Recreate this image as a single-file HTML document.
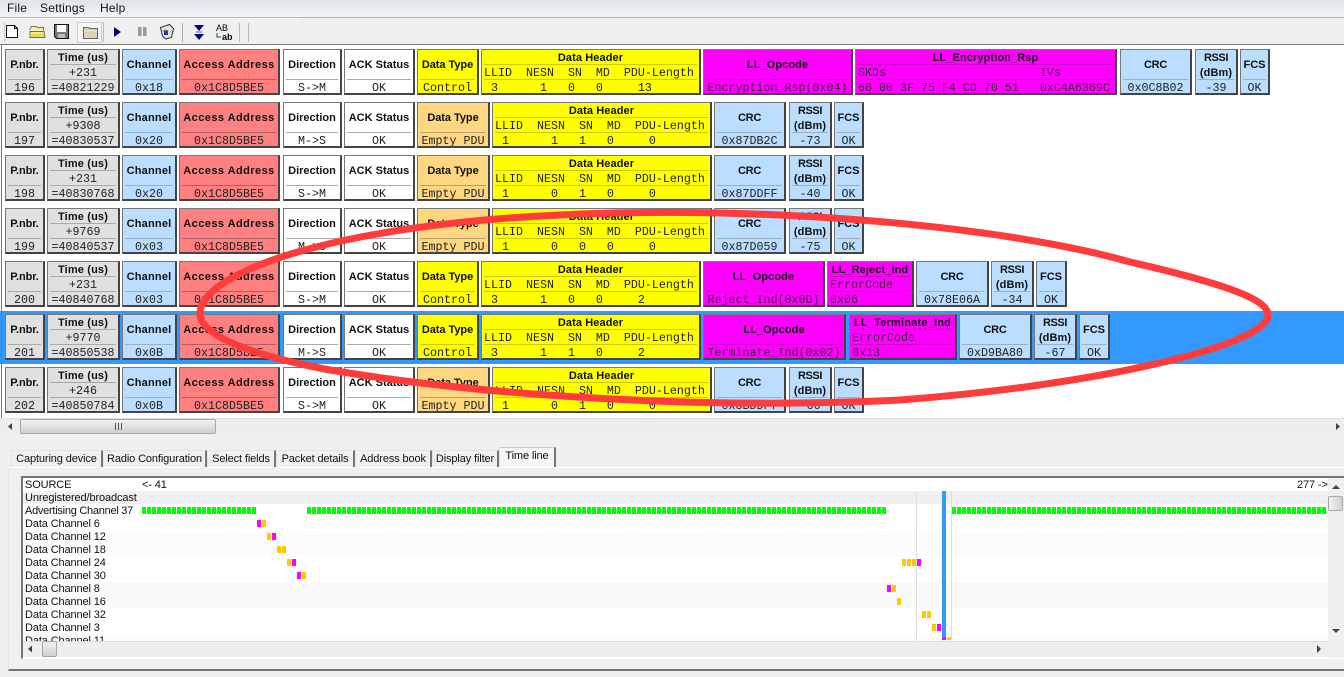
<!DOCTYPE html>
<html><head><meta charset="utf-8"><title>Packet sniffer</title>
<style>
html,body{margin:0;padding:0;background:#f0f0f0}
body{position:relative;width:1344px;height:677px;overflow:hidden;font-family:"Liberation Sans",sans-serif;color:#000}
.a{position:absolute}
#menu{left:0;top:0;width:1344px;height:17px;background:linear-gradient(#dfe3ea,#f2f4f8);border-bottom:1px solid #b4b4b4;font-size:12px;line-height:16px}
#menu span{position:absolute;top:0;letter-spacing:.2px;color:#111}
#main{left:0;top:44px;width:1344px;height:374px;background:#fff;border-top:1px solid #777;box-sizing:border-box}
.sel{position:absolute;left:0;top:311px;width:1344px;height:53px;background:#3399ff}
.r{position:absolute;left:0;width:1344px;height:46px}
.c{position:absolute;top:0;height:46px;box-sizing:border-box;border:1px solid;border-width:1px 2px 2px 1px;border-color:#777 #444 #444 #777;overflow:hidden}
.g{background:#e0e0e0}.b{background:#bbddff}.e{background:#ff8080}.w{background:#fff}.y{background:#ffff00}.o{background:#ffd780}.m{background:#ff00ff}
.c b{position:absolute;left:0;right:0;text-align:center;font-size:11px;line-height:14px;top:8px;color:#111;white-space:nowrap}
.c b.u{top:1px}
.c b.l{top:16px}
.c i{position:absolute;left:2px;right:2px;top:29px;height:1px;background:#aaa}
.c i.h{top:14px}
.y i{background:#cccc00}.m i{background:#cc00cc}.e i{background:#b06060}.o i{background:#b8a070}.b i{background:#9ab0c4}
.c p{position:absolute;margin:0;left:0;right:0;top:31px;text-align:center;font:11.67px/14px "Liberation Mono",monospace;color:#222;white-space:pre}
.c p.n{top:16px}
.c p.x{text-align:left;left:2px}
.m p{color:#402040}
.pn{letter-spacing:-.1px}.tm{letter-spacing:.15px}.ch{letter-spacing:.2px}.aa{letter-spacing:.45px}.dh{letter-spacing:.1px}.op{letter-spacing:.1px}.cr{letter-spacing:-.3px}.rs{letter-spacing:-.4px}.db{letter-spacing:.1px}.dt{letter-spacing:-.05px}
#hs{left:0;top:418px;width:1344px;height:17px;background:#eee;border-top:1px solid #ddd;box-sizing:border-box}
.thumb{position:absolute;box-sizing:border-box;border:1px solid #a8a8a8;border-radius:2px;background:linear-gradient(#f2f2f2,#cfcfcf)}
.tab{position:absolute;top:450px;height:17px;box-sizing:border-box;font-size:11px;line-height:16px;letter-spacing:-.12px;text-align:center;background:#f0f0f0;border:1px solid #e4e4e4;border-right:2px solid #777;border-bottom:0;color:#111;white-space:nowrap}
#panel{left:8px;top:467px;width:1336px;height:204px;border-top:1px solid #fff;border-left:1px solid #e4e4e4;border-bottom:2px solid #777;box-sizing:border-box}
#list{left:21px;top:476px;width:1323px;height:183px;background:#fff;border-top:2px solid #777;border-left:2px solid #777;border-bottom:1px solid #fff;box-sizing:border-box;overflow:hidden}
.bn{position:absolute;left:23px;width:1305px}
.lb{position:absolute;left:25px;font-size:11px;line-height:13px;height:13px;white-space:nowrap;color:#111;letter-spacing:-.12px}
.gr{position:absolute;top:507px;height:7px;background:repeating-linear-gradient(90deg,#00ff00 0,#00ff00 4px,#fff 4px,#fff 5px)}
.k{position:absolute;width:4px;height:7px}
.mg{background:#ff00ff}.or{background:#ffc800}
</style></head><body>
<div class="a" id="menu"><span style="left:7px">File</span><span style="left:40px">Settings</span><span style="left:100px">Help</span></div>
<svg class="a" style="left:0;top:0" width="300" height="45" viewBox="0 0 300 45">
<rect x="0" y="18" width="300" height="1" fill="#fff"/>
<rect x="4" y="22" width="1" height="20" fill="#ccc"/>
<path d="M6.5 25.5h8l3 3v9h-11z" fill="#fff" stroke="#111"/><path d="M14.5 25.5v3h3" fill="none" stroke="#111"/>
<path d="M29.500 29.500l2-3h5l1 1h6v3M30 31.500h14l1 6H30z" fill="#ffe98a" stroke="#7b7530"/><path d="M31 34h13v3H31z" fill="#e8d860"/>
<path d="M54.5 24.5h14v14h-12l-2-2z" fill="#777" stroke="#111"/><rect x="57" y="25" width="9" height="7" fill="#fff"/><rect x="58" y="34" width="7" height="4" fill="#bbb"/>
<rect x="77.5" y="22.5" width="24" height="20" fill="#f7f7f7" stroke="#ccc"/>
<path d="M83.5 27.5h5l1 1h8v10h-14z" fill="#d9d3b0" stroke="#666"/><path d="M84 31h13" stroke="#f2eed8"/>
<rect x="103" y="22" width="1" height="20" fill="#bbb"/>
<path d="M114 27l7 5-7 5z" fill="#000080"/>
<rect x="138" y="27" width="3.5" height="9" fill="#9a9a9a"/><rect x="143" y="27" width="3.5" height="9" fill="#9a9a9a"/>
<path d="M160.500 27.500l9-3 4 4-2 9-6 1.500-3-3z" fill="#e4e4e4" stroke="#333"/><path d="M163 31l3-1 2 1" fill="none" stroke="#666"/><rect x="164" y="31" width="4" height="4" fill="#223a99"/>
<rect x="182" y="23" width="1" height="19" fill="#aaa"/>
<path d="M194 25h10l-5 6z M194 34h10l-5 6z" fill="#000080"/><rect x="196" y="31" width="6" height="2" fill="#9ab"/>
<text x="216" y="31" font-family="Liberation Sans,sans-serif" font-size="9" fill="#000">AB</text>
<text x="222" y="40" font-family="Liberation Sans,sans-serif" font-size="9" font-weight="bold" fill="#000">ab</text>
<path d="M217 33v4h4" fill="none" stroke="#060"/>
<rect x="239" y="23" width="1" height="19" fill="#bbb"/><rect x="248" y="23" width="1" height="19" fill="#bbb"/>
</svg>

<div class="a" id="main" style="position:absolute"></div>
<div class="sel"></div>

<!-- row 196 -->
<div class="r" style="top:49px">
<div class="c g" style="left:5px;width:40px"><b class="pn">P.nbr.</b><i></i><p>196</p></div>
<div class="c g" style="left:47px;width:73px"><b class="u tm">Time (us)</b><i class="h"></i><p class="n">+231</p><i></i><p>=40821229</p></div>
<div class="c b" style="left:122px;width:55px"><b class="ch">Channel</b><i></i><p>0x18</p></div>
<div class="c e" style="left:179px;width:101px"><b class="aa">Access Address</b><i></i><p>0x1C8D5BE5</p></div>
<div class="c w" style="left:283px;width:59px"><b>Direction</b><i></i><p>S-&gt;M</p></div>
<div class="c w" style="left:344px;width:71px"><b>ACK Status</b><i></i><p>OK</p></div>
<div class="c y" style="left:417px;width:62px"><b class="dt">Data Type</b><i></i><p>Control</p></div>
<div class="c y" style="left:481px;width:220px"><b class="u dh">Data Header</b><i class="h"></i><p class="n x">LLID  NESN  SN  MD  PDU-Length</p><i></i><p class="x"> 3      1   0   0     13</p></div>
<div class="c m" style="left:703px;width:150px"><b class="op">LL_Opcode</b><i></i><p>Encryption_Rsp(0x04)</p></div>
<div class="c m" style="left:855px;width:262px"><b class="u op">LL_Encryption_Rsp</b><i class="h"></i><p class="n x">SKDs                      IVs</p><i></i><p class="x">66 00 3F 75 F4 CD 70 51   0xC4A6369C</p></div>
<div class="c b" style="left:1120px;width:72px"><b class="cr">CRC</b><i></i><p>0x0C8B02</p></div>
<div class="c b" style="left:1195px;width:43px"><b class="u rs">RSSI</b><b class="l db">(dBm)</b><i></i><p>-39</p></div>
<div class="c b" style="left:1240px;width:30px"><b>FCS</b><i></i><p>OK</p></div>
</div>

<!-- row 197 -->
<div class="r" style="top:102px">
<div class="c g" style="left:5px;width:40px"><b class="pn">P.nbr.</b><i></i><p>197</p></div>
<div class="c g" style="left:47px;width:73px"><b class="u tm">Time (us)</b><i class="h"></i><p class="n">+9308</p><i></i><p>=40830537</p></div>
<div class="c b" style="left:122px;width:55px"><b class="ch">Channel</b><i></i><p>0x20</p></div>
<div class="c e" style="left:179px;width:101px"><b class="aa">Access Address</b><i></i><p>0x1C8D5BE5</p></div>
<div class="c w" style="left:283px;width:59px"><b>Direction</b><i></i><p>M-&gt;S</p></div>
<div class="c w" style="left:344px;width:71px"><b>ACK Status</b><i></i><p>OK</p></div>
<div class="c o" style="left:417px;width:73px"><b class="dt">Data Type</b><i></i><p>Empty PDU</p></div>
<div class="c y" style="left:492px;width:220px"><b class="u dh">Data Header</b><i class="h"></i><p class="n x">LLID  NESN  SN  MD  PDU-Length</p><i></i><p class="x"> 1      1   1   0     0</p></div>
<div class="c b" style="left:714px;width:72px"><b class="cr">CRC</b><i></i><p>0x87DB2C</p></div>
<div class="c b" style="left:789px;width:43px"><b class="u rs">RSSI</b><b class="l db">(dBm)</b><i></i><p>-73</p></div>
<div class="c b" style="left:834px;width:30px"><b>FCS</b><i></i><p>OK</p></div>
</div>

<!-- row 198 -->
<div class="r" style="top:155px">
<div class="c g" style="left:5px;width:40px"><b class="pn">P.nbr.</b><i></i><p>198</p></div>
<div class="c g" style="left:47px;width:73px"><b class="u tm">Time (us)</b><i class="h"></i><p class="n">+231</p><i></i><p>=40830768</p></div>
<div class="c b" style="left:122px;width:55px"><b class="ch">Channel</b><i></i><p>0x20</p></div>
<div class="c e" style="left:179px;width:101px"><b class="aa">Access Address</b><i></i><p>0x1C8D5BE5</p></div>
<div class="c w" style="left:283px;width:59px"><b>Direction</b><i></i><p>S-&gt;M</p></div>
<div class="c w" style="left:344px;width:71px"><b>ACK Status</b><i></i><p>OK</p></div>
<div class="c o" style="left:417px;width:73px"><b class="dt">Data Type</b><i></i><p>Empty PDU</p></div>
<div class="c y" style="left:492px;width:220px"><b class="u dh">Data Header</b><i class="h"></i><p class="n x">LLID  NESN  SN  MD  PDU-Length</p><i></i><p class="x"> 1      0   1   0     0</p></div>
<div class="c b" style="left:714px;width:72px"><b class="cr">CRC</b><i></i><p>0x87DDFF</p></div>
<div class="c b" style="left:789px;width:43px"><b class="u rs">RSSI</b><b class="l db">(dBm)</b><i></i><p>-40</p></div>
<div class="c b" style="left:834px;width:30px"><b>FCS</b><i></i><p>OK</p></div>
</div>

<!-- row 199 -->
<div class="r" style="top:208px">
<div class="c g" style="left:5px;width:40px"><b class="pn">P.nbr.</b><i></i><p>199</p></div>
<div class="c g" style="left:47px;width:73px"><b class="u tm">Time (us)</b><i class="h"></i><p class="n">+9769</p><i></i><p>=40840537</p></div>
<div class="c b" style="left:122px;width:55px"><b class="ch">Channel</b><i></i><p>0x03</p></div>
<div class="c e" style="left:179px;width:101px"><b class="aa">Access Address</b><i></i><p>0x1C8D5BE5</p></div>
<div class="c w" style="left:283px;width:59px"><b>Direction</b><i></i><p>M-&gt;S</p></div>
<div class="c w" style="left:344px;width:71px"><b>ACK Status</b><i></i><p>OK</p></div>
<div class="c o" style="left:417px;width:73px"><b class="dt">Data Type</b><i></i><p>Empty PDU</p></div>
<div class="c y" style="left:492px;width:220px"><b class="u dh">Data Header</b><i class="h"></i><p class="n x">LLID  NESN  SN  MD  PDU-Length</p><i></i><p class="x"> 1      0   0   0     0</p></div>
<div class="c b" style="left:714px;width:72px"><b class="cr">CRC</b><i></i><p>0x87D059</p></div>
<div class="c b" style="left:789px;width:43px"><b class="u rs">RSSI</b><b class="l db">(dBm)</b><i></i><p>-75</p></div>
<div class="c b" style="left:834px;width:30px"><b>FCS</b><i></i><p>OK</p></div>
</div>

<!-- row 200 -->
<div class="r" style="top:261px">
<div class="c g" style="left:5px;width:40px"><b class="pn">P.nbr.</b><i></i><p>200</p></div>
<div class="c g" style="left:47px;width:73px"><b class="u tm">Time (us)</b><i class="h"></i><p class="n">+231</p><i></i><p>=40840768</p></div>
<div class="c b" style="left:122px;width:55px"><b class="ch">Channel</b><i></i><p>0x03</p></div>
<div class="c e" style="left:179px;width:101px"><b class="aa">Access Address</b><i></i><p>0x1C8D5BE5</p></div>
<div class="c w" style="left:283px;width:59px"><b>Direction</b><i></i><p>S-&gt;M</p></div>
<div class="c w" style="left:344px;width:71px"><b>ACK Status</b><i></i><p>OK</p></div>
<div class="c y" style="left:417px;width:62px"><b class="dt">Data Type</b><i></i><p>Control</p></div>
<div class="c y" style="left:481px;width:220px"><b class="u dh">Data Header</b><i class="h"></i><p class="n x">LLID  NESN  SN  MD  PDU-Length</p><i></i><p class="x"> 3      1   0   0     2</p></div>
<div class="c m" style="left:703px;width:122px"><b class="op">LL_Opcode</b><i></i><p>Reject_Ind(0x0D)</p></div>
<div class="c m" style="left:827px;width:87px"><b class="u op">LL_Reject_Ind</b><i class="h"></i><p class="n x">ErrorCode</p><i></i><p class="x">0x06</p></div>
<div class="c b" style="left:916px;width:73px"><b class="cr">CRC</b><i></i><p>0x78E06A</p></div>
<div class="c b" style="left:991px;width:43px"><b class="u rs">RSSI</b><b class="l db">(dBm)</b><i></i><p>-34</p></div>
<div class="c b" style="left:1036px;width:31px"><b>FCS</b><i></i><p>OK</p></div>
</div>

<!-- row 201 -->
<div class="r" style="top:314px">
<div class="c g" style="left:5px;width:40px"><b class="pn">P.nbr.</b><i></i><p>201</p></div>
<div class="c g" style="left:47px;width:73px"><b class="u tm">Time (us)</b><i class="h"></i><p class="n">+9770</p><i></i><p>=40850538</p></div>
<div class="c b" style="left:122px;width:55px"><b class="ch">Channel</b><i></i><p>0x0B</p></div>
<div class="c e" style="left:179px;width:101px"><b class="aa">Access Address</b><i></i><p>0x1C8D5BE5</p></div>
<div class="c w" style="left:283px;width:59px"><b>Direction</b><i></i><p>M-&gt;S</p></div>
<div class="c w" style="left:344px;width:71px"><b>ACK Status</b><i></i><p>OK</p></div>
<div class="c y" style="left:417px;width:62px"><b class="dt">Data Type</b><i></i><p>Control</p></div>
<div class="c y" style="left:481px;width:220px"><b class="u dh">Data Header</b><i class="h"></i><p class="n x">LLID  NESN  SN  MD  PDU-Length</p><i></i><p class="x"> 3      1   1   0     2</p></div>
<div class="c m" style="left:703px;width:143px"><b class="op">LL_Opcode</b><i></i><p>Terminate_Ind(0x02)</p></div>
<div class="c m" style="left:849px;width:108px"><b class="u" style="letter-spacing:.2px">LL_Terminate_Ind</b><i class="h"></i><p class="n x">ErrorCode</p><i></i><p class="x">0x13</p></div>
<div class="c b" style="left:959px;width:73px"><b class="cr">CRC</b><i></i><p>0xD9BA80</p></div>
<div class="c b" style="left:1034px;width:43px"><b class="u rs">RSSI</b><b class="l db">(dBm)</b><i></i><p>-67</p></div>
<div class="c b" style="left:1079px;width:31px"><b>FCS</b><i></i><p>OK</p></div>
</div>

<!-- row 202 -->
<div class="r" style="top:367px">
<div class="c g" style="left:5px;width:40px"><b class="pn">P.nbr.</b><i></i><p>202</p></div>
<div class="c g" style="left:47px;width:73px"><b class="u tm">Time (us)</b><i class="h"></i><p class="n">+246</p><i></i><p>=40850784</p></div>
<div class="c b" style="left:122px;width:55px"><b class="ch">Channel</b><i></i><p>0x0B</p></div>
<div class="c e" style="left:179px;width:101px"><b class="aa">Access Address</b><i></i><p>0x1C8D5BE5</p></div>
<div class="c w" style="left:283px;width:59px"><b>Direction</b><i></i><p>S-&gt;M</p></div>
<div class="c w" style="left:344px;width:71px"><b>ACK Status</b><i></i><p>OK</p></div>
<div class="c o" style="left:417px;width:73px"><b class="dt">Data Type</b><i></i><p>Empty PDU</p></div>
<div class="c y" style="left:492px;width:220px"><b class="u dh">Data Header</b><i class="h"></i><p class="n x">LLID  NESN  SN  MD  PDU-Length</p><i></i><p class="x"> 1      0   1   0     0</p></div>
<div class="c b" style="left:714px;width:72px"><b class="cr">CRC</b><i></i><p>0x8BDDF7</p></div>
<div class="c b" style="left:789px;width:43px"><b class="u rs">RSSI</b><b class="l db">(dBm)</b><i></i><p>-66</p></div>
<div class="c b" style="left:834px;width:30px"><b>FCS</b><i></i><p>OK</p></div>
</div>

<div class="a" style="left:1px;top:45px;width:1px;height:390px;background:#777"></div>
<div class="a" id="hs">
<div class="thumb" style="left:20px;top:0;width:196px;height:15px"></div>
<svg class="a" style="left:0;top:0" width="1344" height="16"><path d="M8 7.500l4-3.500v7z" fill="#444"/><path d="M1336 4v7l4-3.500z" fill="#444"/><path d="M115.500 4v7M118.500 4v7M121.500 4v7" stroke="#555"/></svg>
</div>

<div class="a" id="panel"></div>
<div class="tab" style="left:11px;width:92px">Capturing device</div>
<div class="tab" style="left:103px;width:104px">Radio Configuration</div>
<div class="tab" style="left:207px;width:69px">Select fields</div>
<div class="tab" style="left:276px;width:79px">Packet details</div>
<div class="tab" style="left:355px;width:77px">Address book</div>
<div class="tab" style="left:432px;width:67px">Display filter</div>
<div class="tab" style="left:499px;top:447px;width:57px;height:20px;background:#f6f6f6;border-top:1px solid #ccc">Time line</div>

<div class="a" id="list"></div>
<div class="bn" style="top:491px;height:13px;background:#f0f0f0"></div>
<div class="bn" style="top:530px;height:26px;background:#fcfcfc"></div>
<div class="bn" style="top:582px;height:26px;background:#fafafa"></div>
<div class="bn" style="top:634px;height:7px;background:#fcfcfc"></div>

<div class="lb" style="top:479px">SOURCE</div>
<div class="lb" style="top:479px;left:142px">&lt;- 41</div>
<div class="lb" style="top:479px;left:1297px">277 -&gt;</div>
<div class="lb" style="top:492px">Unregistered/broadcast</div>
<div class="lb" style="top:505px;letter-spacing:-.26px">Advertising Channel 37</div>
<div class="lb" style="top:518px">Data Channel 6</div>
<div class="lb" style="top:531px">Data Channel 12</div>
<div class="lb" style="top:544px">Data Channel 18</div>
<div class="lb" style="top:557px">Data Channel 24</div>
<div class="lb" style="top:570px">Data Channel 30</div>
<div class="lb" style="top:583px">Data Channel 8</div>
<div class="lb" style="top:596px">Data Channel 16</div>
<div class="lb" style="top:609px">Data Channel 32</div>
<div class="lb" style="top:622px">Data Channel 3</div>
<div class="lb" style="top:635px;height:6px;overflow:hidden">Data Channel 11</div>

<div class="gr" style="left:142px;width:115px"></div>
<div class="gr" style="left:307px;width:580px"></div>
<div class="gr" style="left:952px;width:375px"></div>

<div class="a" style="left:916px;top:491px;width:1px;height:150px;background:#ddd"></div>
<div class="a" style="left:951px;top:491px;width:1px;height:150px;background:#ddd"></div>
<div class="a" style="left:942px;top:491px;width:4px;height:146px;background:#3399ff"></div>

<div class="k mg" style="left:257px;top:520px"></div><div class="k or" style="left:262px;top:520px"></div>
<div class="k or" style="left:267px;top:533px"></div><div class="k mg" style="left:272px;top:533px"></div>
<div class="k or" style="left:277px;top:546px"></div><div class="k or" style="left:282px;top:546px"></div>
<div class="k or" style="left:287px;top:559px"></div><div class="k mg" style="left:292px;top:559px"></div>
<div class="k mg" style="left:297px;top:572px"></div><div class="k or" style="left:302px;top:572px"></div>
<div class="k or" style="left:902px;top:559px"></div><div class="k or" style="left:907px;top:559px"></div><div class="k or" style="left:912px;top:559px"></div><div class="k mg" style="left:917px;top:559px"></div>
<div class="k mg" style="left:887px;top:585px"></div><div class="k or" style="left:892px;top:585px"></div>
<div class="k or" style="left:897px;top:598px"></div>
<div class="k or" style="left:922px;top:611px"></div><div class="k or" style="left:927px;top:611px"></div>
<div class="k or" style="left:932px;top:624px"></div><div class="k mg" style="left:937px;top:624px"></div>
<div class="k mg" style="left:942px;top:637px;height:3px"></div><div class="k or" style="left:947px;top:637px;height:3px"></div>

<div class="a" style="left:23px;top:641px;width:1305px;height:16px;background:#eee;border-top:1px solid #ddd;box-sizing:border-box"></div>
<div class="thumb" style="left:42px;top:641px;width:15px;height:16px"></div>
<div class="a" style="left:1328px;top:478px;width:16px;height:180px;background:#f0f0f0"></div>
<div class="thumb" style="left:1328px;top:496px;width:15px;height:15px;background:linear-gradient(90deg,#f4f4f4,#cfcfcf)"></div>
<svg class="a" style="left:0;top:470px" width="1344" height="190"><path d="M28 179l4-3.500v7z" fill="#444"/><path d="M1317 175v8l4-4z" fill="#444"/><path d="M1332 19l4-4 4 4z" fill="#444"/><path d="M1332 159l4 4 4-4z" fill="#444"/></svg>

<svg class="a" style="left:0;top:0;pointer-events:none" width="1344" height="677" viewBox="0 0 1344 677">
<path d="M200 312C205 270 340 225 560 215C760 205 1000 225 1130 262C1230 285 1268 300 1268 315C1268 345 1100 385 900 400C700 410 480 395 330 370C250 355 198 335 200 312Z" fill="none" stroke="#ff3b3b" stroke-width="7"/>
</svg>
</body></html>
